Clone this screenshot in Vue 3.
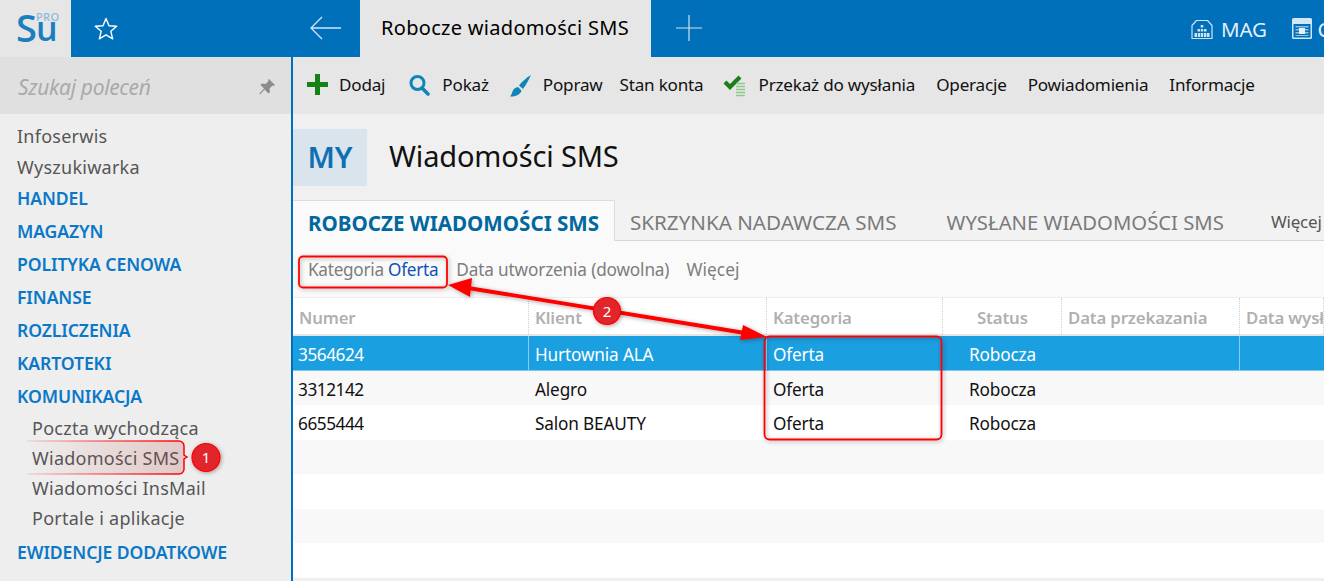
<script setup>
const groups = [
  { label: 'Infoserwis', kind: 'plain' },
  { label: 'Wyszukiwarka', kind: 'plain' },
  { label: 'HANDEL', kind: 'head' },
  { label: 'MAGAZYN', kind: 'head' },
  { label: 'POLITYKA CENOWA', kind: 'head' },
  { label: 'FINANSE', kind: 'head' },
  { label: 'ROZLICZENIA', kind: 'head' },
  { label: 'KARTOTEKI', kind: 'head' },
  { label: 'KOMUNIKACJA', kind: 'head' },
  { label: 'Poczta wychodząca', kind: 'sub' },
  { label: 'Wiadomości SMS', kind: 'sub' },
  { label: 'Wiadomości InsMail', kind: 'sub' },
  { label: 'Portale i aplikacje', kind: 'sub' },
  { label: 'EWIDENCJE DODATKOWE', kind: 'head last' }
]
const rows = [
  ['3564624', 'Hurtownia ALA', 'Oferta', 'Robocza'],
  ['3312142', 'Alegro', 'Oferta', 'Robocza'],
  ['6655444', 'Salon BEAUTY', 'Oferta', 'Robocza'],
  ['', '', '', ''],
  ['', '', '', ''],
  ['', '', '', ''],
  ['', '', '', '']
]
const heads = ['Numer', 'Klient', 'Kategoria', 'Status', 'Data przekazania', 'Data wysłania']
</script>

<template>
  <div class="app">
    <header class="top">
      <div class="logo">
        <span class="s">S</span>
        <div class="lstack"><span class="pro">PRO</span><span class="u">u</span></div>
      </div>
      <div class="fav">
        <svg width="28" height="28" viewBox="0 0 28 28"><path d="M14 3.500l3 7.200 7.700.6-5.900 5 1.900 7.600-6.700-4.100-6.700 4.100 1.900-7.600-5.900-5 7.700-.6z" fill="none" stroke="#fff" stroke-width="1.400" stroke-linejoin="round"/></svg>
      </div>
      <div class="back">
        <svg width="34" height="26" viewBox="0 0 34 26"><path d="M32 13H2M13 2L2 13l11 11" fill="none" stroke="#d3e5f2" stroke-width="1.300"/></svg>
      </div>
      <div class="tab-active">Robocze wiadomości SMS</div>
      <div class="plus">
        <svg width="26" height="26" viewBox="0 0 26 26"><path d="M13 0v26M0 13h26" stroke="#cfe2f1" stroke-width="1.200"/></svg>
      </div>
      <div class="right">
        <svg class="house" width="22" height="22" viewBox="0 0 22 22"><path d="M1 20.500V7.500L5.500 2.500h11L21 7.500v13z" fill="none" stroke="#cfe2f1" stroke-width="1.200" stroke-linejoin="round"/><path d="M9.700 7h2.600v2.500H9.700zM6.500 11h2.500v2.500H6.500zM9.800 11h2.400v2.500H9.800zM13 11h2.500v2.500H13zM3.500 15h2.500v4H3.500zM6.800 15h2.400v4H6.800zM9.900 15h2.300v4H9.900zM13 15h2.400v4H13zM16 15h2.500v4H16z" fill="#cfe2f1"/></svg>
        <span class="mag">MAG</span>
        <svg class="cal" width="20" height="21" viewBox="0 0 20 21"><rect width="20" height="21" rx="1.500" fill="#d3e6f4"/><rect x="1.500" y="6" width="17" height="13.500" fill="#0070ba"/><path d="M3.500 8h13v1.500h-13zM3.500 11h13v1.500h-13zM3.500 14h13v1.500h-13zM3.500 17h13v1h-13z" fill="#cfe2f1" opacity=".7"/><path d="M7 10h6v6H7z" fill="#e6f0f8"/></svg>
        <span class="mag cut">C</span>
      </div>
    </header>

    <div class="body">
      <aside class="side">
        <div class="search">
          <span>Szukaj poleceń</span>
          <svg width="18" height="18" viewBox="0 0 18 18"><path d="M11 1l6 6-1.500 1-1-.5-3 3 .5 3.500-1.500 1.500L6.500 11.500 2 16.500l-.8-.8 4.800-5.200L2.500 7 4 5.500l3.500.5 3-3-.5-1z" fill="#8c8c8c"/></svg>
        </div>
        <nav class="nav">
          <div v-for="g in groups" :key="g.label" :class="['item', g.kind]">{{ g.label }}</div>
        </nav>
      </aside>

      <main class="main">
        <div class="toolbar">
          <div class="tool first">
            <svg width="21" height="21" viewBox="0 0 21 21"><path d="M8 0h5v8h8v5h-8v8H8v-8H0V8h8z" fill="#178117"/></svg>
            <span>Dodaj</span>
          </div>
          <div class="tool t2">
            <svg width="22" height="22" viewBox="0 0 22 22"><circle cx="9.500" cy="9" r="6.500" fill="none" stroke="#0f86b9" stroke-width="3"/><path d="M14 14l6 6" stroke="#0f86b9" stroke-width="3.500" stroke-linecap="round"/></svg>
            <span>Pokaż</span>
          </div>
          <div class="tool t3">
            <svg width="22" height="24" viewBox="0 0 22 24"><path d="M22 2C19 8 17 12 14 16L10 12.500C13 8.500 17 5 22 2z" fill="#0f86b9"/><path d="M9 14l3.500 3.500C12 21 7 24 1 23.500c2.500-2.500 2-5.500 4-7.500 1-1 2.500-2 4-2z" fill="#0f86b9"/></svg>
            <span>Popraw</span>
          </div>
          <div class="tool t4"><span>Stan konta</span></div>
          <div class="tool t5">
            <svg width="24" height="24" viewBox="0 0 24 24"><path d="M2 9l5 5L17 4" fill="none" stroke="#1a7f1a" stroke-width="4.200"/><path d="M13 10.500h9M13 13.500h9M13 16.500h9M13 19.500h9M13 22.500h9" stroke="#8fc98f" stroke-width="1.700"/></svg>
            <span>Przekaż do wysłania</span>
          </div>
          <div class="tool t6"><span>Operacje</span></div>
          <div class="tool t6"><span>Powiadomienia</span></div>
          <div class="tool t6"><span>Informacje</span></div>
        </div>

        <div class="title">
          <div class="badge">MY</div>
          <h1>Wiadomości SMS</h1>
        </div>

        <div class="tabs">
          <div class="tabx on">ROBOCZE WIADOMOŚCI SMS</div>
          <div class="tabx s2">SKRZYNKA NADAWCZA SMS</div>
          <div class="tabx s3">WYSŁANE WIADOMOŚCI SMS</div>
          <div class="more">Więcej</div>
        </div>

        <div class="filters">
          <span class="f1">Kategoria <b>Oferta</b></span>
          <span class="f2">Data utworzenia (dowolna)</span>
          <span class="f3">Więcej</span>
        </div>

        <div class="table">
          <div class="thead">
            <div v-for="(h, i) in heads" :key="h" :class="['th', 'c' + i]">{{ h }}</div>
          </div>
          <div v-for="(r, i) in rows" :key="i" :class="['tr', { sel: i === 0, odd: i % 2 === 1 }]">
            <div v-for="(c, j) in r" :key="j" :class="['td', 'c' + j]">{{ c }}</div>
            <div class="td c4"></div>
            <div class="td c5"></div>
          </div>
        </div>
      </main>
    </div>

    <svg class="marks" width="1324" height="581" viewBox="0 0 1324 581">
      <defs>
        <filter id="sh" x="-20%" y="-20%" width="140%" height="140%"><feDropShadow dx="1" dy="1" stdDeviation="2" flood-color="#000" flood-opacity=".35"/></filter>
        <linearGradient id="hl" gradientUnits="userSpaceOnUse" x1="27" x2="184" y1="0" y2="0"><stop offset="0" stop-color="#b03030" stop-opacity="0"/><stop offset=".5" stop-color="#b03030" stop-opacity=".1"/><stop offset="1" stop-color="#b03030" stop-opacity=".2"/></linearGradient>
        <linearGradient id="hs" gradientUnits="userSpaceOnUse" x1="27" x2="184" y1="0" y2="0"><stop offset="0" stop-color="#f00" stop-opacity=".1"/><stop offset=".5" stop-color="#f00" stop-opacity=".55"/><stop offset="1" stop-color="#f00"/></linearGradient>
      </defs>
      <path d="M27 441H179a5 5 0 0 1 5 5V455l3 2-3 2v10a5 5 0 0 1-5 5H27z" fill="url(#hl)"/>
      <path d="M27 441H179a5 5 0 0 1 5 5V455l3 2-3 2v10a5 5 0 0 1-5 5H27" fill="none" stroke="url(#hs)" stroke-width="1.500"/>
      <rect x="299" y="256.500" width="148" height="31" rx="4" fill="none" stroke="#f00" stroke-width="1.800" filter="url(#sh)"/>
      <rect x="764.500" y="336.500" width="177" height="103" rx="5" fill="none" stroke="#f00" stroke-width="1.800" filter="url(#sh)"/>
      <g filter="url(#sh)">
        <path d="M468 288L745 333" stroke="#f00" stroke-width="3.800"/>
        <path d="M448 285L472 278 470 297z" fill="#f00"/>
        <path d="M767 337L743 325 740 340z" fill="#f00"/>
      </g>
      <circle cx="206" cy="457.500" r="14" fill="#e0262b" stroke="#f00" stroke-width="1.200" filter="url(#sh)"/>
      <circle cx="607" cy="311" r="13.500" fill="#e0262b" stroke="#f00" stroke-width="1.200" filter="url(#sh)"/>
      <text x="206" y="463" class="num">1</text>
      <text x="607" y="317" class="num">2</text>
    </svg>
  </div>
</template>

<style scoped>
.app {
  position: relative;
  width: 1324px;
  height: 581px;
  overflow: hidden;
  font-family: "Noto Sans", "Open Sans", sans-serif;
  background: #f0f0f0;
}
.top { display: flex; height: 57px; background: #0070ba; }
.logo { width: 71px; background: #e6e6e6; display: flex; padding-left: 16px; box-sizing: border-box; color: #1a7fc1; font-family: "Open Sans", sans-serif; font-weight: 600; }
.s { font-size: 38px; line-height: 54px; height: 54px; }
.lstack { display: flex; flex-direction: column; margin-left: -1px; }
.pro { font-size: 11px; font-weight: 600; color: #8dbcdc; line-height: 9px; margin-top: 12px; letter-spacing: .4px; }
.u { font-size: 34px; line-height: 8px; height: 8px; margin-top: 3px; }
.fav { width: 238px; padding: 15px 0 0 21px; box-sizing: border-box; }
.back { width: 51px; padding-top: 15px; box-sizing: border-box; }
.tab-active { width: 291px; background: #e6e6e6; font-size: 20px; color: #000; line-height: 56px; padding-left: 21px; box-sizing: border-box; letter-spacing: .3px; }
.plus { padding: 15px 0 0 25px; }
.right { margin-left: auto; display: flex; align-items: center; width: 133px; flex: none; overflow: hidden; box-sizing: border-box; }
.house { flex: none; }
.mag { color: #e3eff8; font-size: 20.500px; margin-left: 8px; letter-spacing: -.2px; }
.cal { margin-left: 25px; flex: none; }
.cut { margin-left: 6px; }
.body { display: flex; height: 524px; }
.side { width: 291px; background: #eee; flex: none; }
.search { height: 57px; background: #e0e0e0; display: flex; align-items: center; justify-content: space-between; padding: 3px 15px 0 18px; box-sizing: border-box; }
.search span { font-style: italic; font-size: 21px; color: #aaa; letter-spacing: -.35px; }
.nav { padding: 7px 0 0 17px; }
.item { line-height: 31px; height: 31px; font-size: 18px; color: #565656; letter-spacing: .25px; white-space: nowrap; }
.head { color: #0a78c8; font-weight: 600; font-size: 17.600px; height: 33px; line-height: 31px; letter-spacing: -.1px; }
.sub { padding-left: 15px; height: 30px; line-height: 28px; }
.last { margin-top: 3px; }
.main { flex: 1; min-width: 0; border-left: 2px solid #0070ba; }
.toolbar { height: 57px; background: #e6e6e6; display: flex; align-items: center; padding-bottom: 2px; box-sizing: border-box; font-size: 17.100px; color: #111; letter-spacing: -.2px; white-space: nowrap; }
.tool { display: flex; align-items: center; gap: 11px; }
.first { margin-left: 14px; }
.t2 { margin-left: 23px; gap: 12px; }
.t3 { margin-left: 20px; gap: 12px; }
.t4 { margin-left: 17px; }
.t5 { margin-left: 20px; gap: 11px; }
.t6 { margin-left: 21px; }
.title { height: 86px; display: flex; padding-top: 15px; box-sizing: border-box; }
.badge { width: 74px; height: 57px; background: #d9e4ec; color: #0f6fb3; font-size: 29.500px; font-weight: 600; display: flex; align-items: center; justify-content: center; padding-bottom: 3px; box-sizing: border-box; }
h1 { margin: 0 0 0 22px; font-weight: 400; font-size: 29px; line-height: 54px; color: #111; letter-spacing: -.15px; }
.tabs { height: 41px; display: flex; align-items: center; border-bottom: 1px solid #d8d8d8; box-sizing: border-box; background: #f2f2f2; white-space: nowrap; font-size: 20.600px; color: #7a7a7a; position: relative; }
.tabx { line-height: 44px; height: 40px; }
.on { height: 41px; width: 322px; box-sizing: border-box; background: #fafafa; border: 1px solid #dcdcdc; border-bottom: 0; border-left: 0; color: #00689f; font-weight: 700; padding-left: 15px; font-size: 20.600px; margin-top: 1px; }
.s2 { margin-left: 15px; }
.s3 { margin-left: 50px; font-size: 20.300px; }
.more { margin-left: 47px; font-size: 17px; color: #555; letter-spacing: -.2px; padding-top: 2px; }
.filters { height: 56px; background: #fafafa; display: flex; align-items: center; padding: 0 0 0 15px; box-sizing: border-box; font-size: 17.200px; color: #7d7d7d; letter-spacing: -.15px; }
.filters b { font-weight: 400; color: #1250b8; }
.f1 { letter-spacing: -.28px; }
.f2 { margin-left: 18px; }
.f3 { margin-left: 17px; letter-spacing: .1px; }
.table { font-size: 17.200px; letter-spacing: -.15px; }
.thead { display: flex; height: 39px; background: #fff; border-top: 1px solid #eee; border-bottom: 2px solid #e6e6e6; box-sizing: border-box; }
.th { font-weight: 600; color: #b0b0b0; line-height: 40px; padding-left: 6px; box-sizing: border-box; border-right: 1px dotted #d0d0d0; white-space: nowrap; overflow: hidden; font-size: 16.800px; }
.tr { display: flex; height: 35px; background: #fff; color: #111; }
.tr.odd { background: #f8f8f8; height: 34px; }
.tr.sel { background: #1a9fe0; color: #fff; height: 35px; border-bottom: 1px solid #79c5ec; box-sizing: border-box; }
.td { line-height: 37px; padding-left: 6px; box-sizing: border-box; white-space: nowrap; }
.sel .c0, .sel .c1, .sel .c4 { border-right: 1px solid #8acdf0; }
.td.c0 { letter-spacing: -.45px; padding-left: 5px; }
.c0 { width: 236px; flex: none; }
.c1 { width: 238px; flex: none; }
.c2 { width: 176px; flex: none; }
.c3 { width: 119px; flex: none; }
.c4 { width: 178px; flex: none; }
.c5 { flex: 1; }
.td.c3 { padding-left: 26px; }
.th.c3 { padding-left: 34px; }
.marks { position: absolute; left: 0; top: 0; pointer-events: none; }
.num { fill: #fff; font-size: 15px; text-anchor: middle; font-family: "Noto Sans", sans-serif; }
</style>
